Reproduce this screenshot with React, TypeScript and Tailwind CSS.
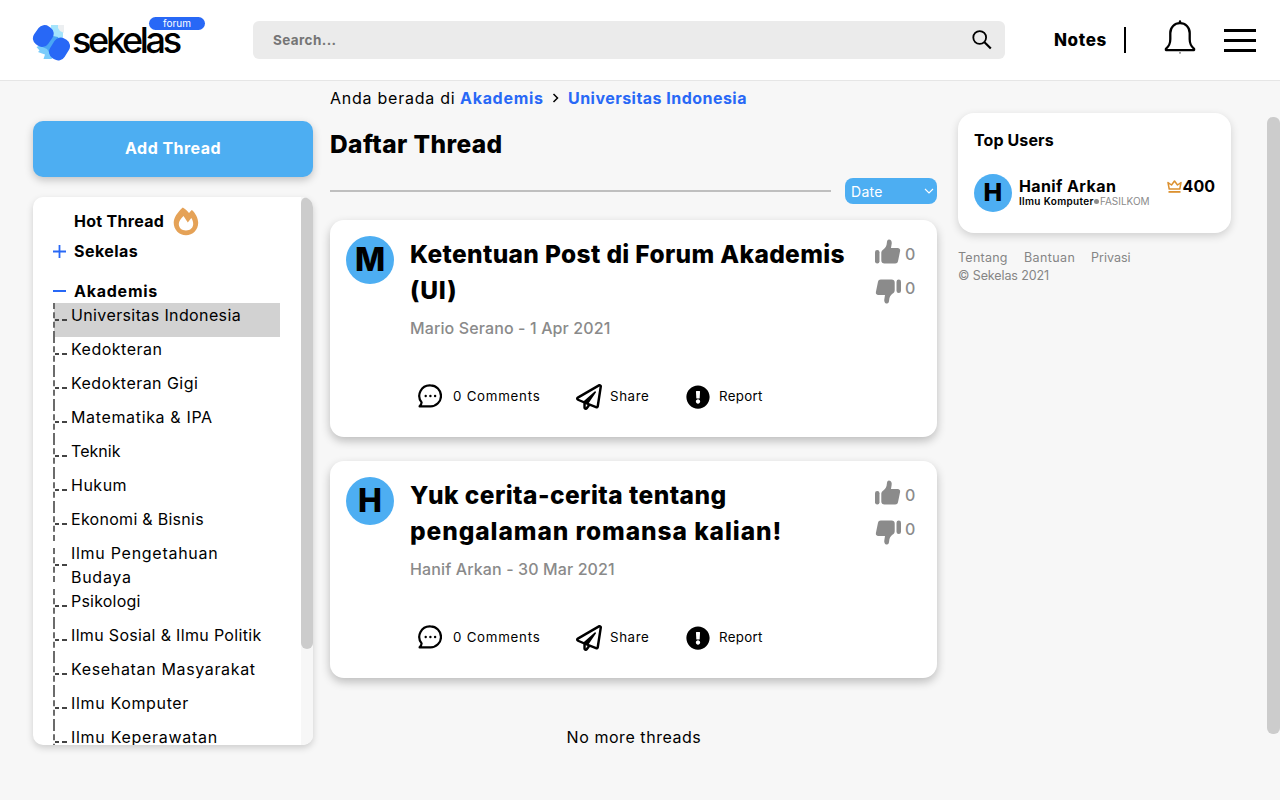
import React from "react";
import { FaRegPaperPlane, FaExclamationCircle } from "react-icons/fa";

function LogoMark() {
  return (
    <svg width="38" height="40" viewBox="0 0 38 40" className="shrink-0">
      <path d="M19 3h12v12l-5 6-8-4z" fill="#a4e4fc" />
      <path d="M26 3h6v8l-4-2-2-3z" fill="#eceff1" />
      <path d="M4.500 25l3 3.500L6 30l4 1.500 3 1-1.500 4.500h8l8-12-8-7z" fill="#7accfb" />
      <path d="M8 24l10-6 3-4 5 1 2 5-10 12-3-5z" fill="#4aa6f4" />
      <rect x="-8.500" y="-11" width="17" height="22" rx="7.400" transform="translate(11.300 14) rotate(36)" fill="#2868f6" />
      <rect x="-8.500" y="-11.500" width="17" height="23" rx="7.400" transform="translate(27.500 27) rotate(32)" fill="#2868f6" />
    </svg>
  );
}

function BellIcon() {
  return (
    <svg width="32" height="36" viewBox="0 0 32 36" fill="none">
      <path d="M16 3.200c-5.600 0-9.700 4.100-9.700 9.700v6.300c0 5-1.200 6.800-4.400 9.600v1.300h28.200v-1.300c-3.200-2.800-4.400-4.600-4.400-9.600v-6.300c0-5.600-4.100-9.700-9.700-9.700z" stroke="#000" strokeWidth="2.300" strokeLinejoin="round" />
      <path d="M14.800 3V1.500a1.200 1.200 0 0 1 2.400 0V3z" fill="#000" />
      <path d="M15 32.400h2c0 1.400-2 1.400-2 0z" fill="#333" />
    </svg>
  );
}

function FlameIcon() {
  return (
    <svg width="26" height="29" viewBox="0 0 26 29">
      <path fillRule="evenodd" d="M9.800.5c2.500 1.400 4.600 3.400 6.200 5.600 1-1.500 2.100-2.600 2.900-3.200 3.800 3.400 6.300 8.500 6.300 12.900C25.200 22.900 19.700 28.300 13 28.300S.7 22.900.7 15.800C.7 11 4.400 5.200 9.800.5zM13 23.500c4.300 0 7.200-2.900 7.200-6.500 0-2.300-.8-4.400-1.900-6l-3.500 4.500L10.500 9C7.800 11.600 5.800 14.300 5.800 17c0 3.700 2.900 6.500 7.200 6.500z" fill="#e5a257" />
    </svg>
  );
}

function ThumbIcon() {
  return (
    <svg width="27" height="26" viewBox="0 0 27 26" fill="#8b8b8b">
      <rect x="1" y="11" width="4.500" height="13.500" rx="2.200" />
      <path d="M7.300 13.800c0-1.500.7-2.400 2-3.400 2.600-2 3.300-3.700 3.600-7 .2-1.900.8-2.900 2.100-2.900 2.300 0 3.100 2.300 2.600 4.800L17 9h6.600c1.900 0 2.900 1.400 2.500 3l-2.100 10.300c-.4 1.500-1.300 2.200-2.800 2.200H10.500c-2 0-3.200-.9-3.200-2.900z" />
    </svg>
  );
}

function CommentIcon() {
  return (
    <svg width="24" height="24" viewBox="0 0 24 24" fill="none">
      <path d="M12.500 1.400A10.500 10.500 0 1 1 12.500 22.400H1.600c1.100-1.100 1.900-2 2-4A10.500 10.500 0 0 1 12.500 1.400z" stroke="#000" strokeWidth="2.200" strokeLinejoin="round" />
      <g fill="#000">
        <circle cx="7.700" cy="12" r="1.200" />
        <circle cx="12.400" cy="12" r="1.200" />
        <circle cx="17.100" cy="12" r="1.200" />
      </g>
    </svg>
  );
}

function CrownIcon() {
  return (
    <svg width="15" height="13" viewBox="0 0 15 13" fill="none" stroke="#dc9130" strokeWidth="1.500" strokeLinejoin="round">
      <path d="M2.200 9L1 2.500 4.500 5l3-4 3 4L14 2.500 12.800 9z" />
      <path d="M1.500 11.900h12" strokeWidth="1.800" />
    </svg>
  );
}

function Header() {
  return (
    <header className="flex h-[81px] shrink-0 items-start border-b border-[#e6e6e6] bg-white">
      <div className="relative mt-[22px] ml-8 flex h-10 w-[221px] items-start">
        <LogoMark />
        <span className="ml-[2px] text-[36px] leading-[36px] font-medium tracking-[-3.300px]">sekelas</span>
        <span className="absolute -top-[5px] left-[117px] flex h-[13px] w-[56px] items-center justify-center rounded-full bg-[#2868f6] text-[10px] text-white">
          forum
        </span>
      </div>
      <div className="mt-[21px] flex h-[38px] w-[752px] items-center justify-between rounded-md bg-[#ebebeb] pr-3 pl-5">
        <span className="text-[13.500px] font-bold tracking-[0.400px] text-[#757575]">Search...</span>
        <svg width="22" height="22" viewBox="0 0 22 22" fill="none" stroke="#000">
          <circle cx="8.700" cy="8.500" r="6.400" strokeWidth="1.800" />
          <path d="M13.500 13.300l6.300 6.200" strokeWidth="2.200" />
        </svg>
      </div>
      <span className="mt-[28px] ml-[49px] w-[70px] text-[17px] leading-6 font-extrabold tracking-[0.600px]">Notes</span>
      <div className="mt-[27px] h-[26px] w-[2px] bg-black" />
      <div className="mt-5 ml-[38px]">
        <BellIcon />
      </div>
      <div className="mt-[29px] ml-7 flex w-8 flex-col gap-[7px]">
        <div className="h-[3px] bg-black" />
        <div className="h-[3px] bg-black" />
        <div className="h-[3px] bg-black" />
      </div>
    </header>
  );
}

const faculties = [
  { name: "Universitas Indonesia", track: "tracking-[0.380px]" },
  { name: "Kedokteran", track: "tracking-[0.500px]" },
  { name: "Kedokteran Gigi", track: "tracking-[0.450px]" },
  { name: "Matematika & IPA", track: "tracking-[0.650px]" },
  { name: "Teknik", track: "tracking-[0.050px]" },
  { name: "Hukum", track: "tracking-[0.500px]" },
  { name: "Ekonomi & Bisnis", track: "tracking-[0.280px]" },
  { name: "Ilmu Pengetahuan Budaya", track: "tracking-[0.720px]" },
  { name: "Psikologi", track: "tracking-[0.200px]" },
  { name: "Ilmu Sosial & Ilmu Politik", track: "tracking-[0.330px]" },
  { name: "Kesehatan Masyarakat", track: "tracking-[0.650px]" },
  { name: "Ilmu Komputer", track: "tracking-[0.650px]" },
  { name: "Ilmu Keperawatan", track: "tracking-[0.710px]" },
];

function Sidebar() {
  return (
    <aside className="mt-10 ml-[33px] flex w-[280px] flex-col">
      <button className="h-14 rounded-[10px] bg-[#4daef2] pb-0.5 text-[16px] font-bold tracking-[0.450px] text-white shadow-[0_3px_8px_rgba(0,0,0,0.22)]">
        Add Thread
      </button>
      <div className="mt-5 flex h-[548px] overflow-hidden rounded-[10px] bg-white shadow-[0_3px_7px_rgba(0,0,0,0.17)]">
        <div className="flex w-[268px] flex-col pl-5">
          <div className="mt-[9px] flex h-[30px] shrink-0 items-center pl-[21px] text-[16px] font-bold">
            <span className="w-[99px] tracking-[0.300px]">Hot Thread</span>
            <FlameIcon />
          </div>
          <div className="flex h-[30px] shrink-0 items-center text-[16px] font-bold tracking-[0.450px]">
            <svg width="13" height="13" viewBox="0 0 13 13" stroke="#2868f6" strokeWidth="1.800" className="mr-2">
              <path d="M0 6.500h13M6.500 0v13" />
            </svg>
            Sekelas
          </div>
          <div className="mt-[10px] flex h-[27px] shrink-0 items-center pt-[2px] text-[16px] font-bold tracking-[0.750px]">
            <div className="mr-2 h-[2px] w-[13px] bg-[#2868f6]" />
            Akademis
          </div>
          <ul className="flex shrink-0 flex-col">
            {faculties.map((f, i) => (
              <li
                key={f.name}
                className={
                  "flex min-h-[34px] w-[227px] shrink-0 items-center " +
                  (i === 0 ? "bg-[linear-gradient(90deg,white_1px,#d2d2d2_1px)]" : "")
                }
              >
                <div className="flex h-[34px] w-[14px] items-center border-l-2 border-dashed border-[#6b6b6b]">
                  <div className="h-[2px] w-full bg-[linear-gradient(90deg,#444_4px,transparent_4px,transparent_7px,#444_7px)]" />
                </div>
                <span className={"ml-1 w-[170px] self-start text-[16px] leading-6 " + (i === 7 ? "" : "whitespace-nowrap ") + f.track}>
                  {f.name}
                </span>
              </li>
            ))}
          </ul>
        </div>
        <div className="w-3 bg-[#f7f7f7]">
          <div className="h-[452px] rounded-md bg-[#cccccc]" />
        </div>
      </div>
    </aside>
  );
}

function Thread({ initial, lines, meta, tracks }: { initial: string; lines: string[]; meta: string; tracks: string[] }) {
  return (
    <article className="flex h-[217px] w-[607px] shrink-0 rounded-[14px] bg-white pt-4 pl-4 shadow-[0_4px_10px_rgba(0,0,0,0.24)]">
      <div className="flex size-12 shrink-0 items-center justify-center rounded-full bg-[#4daef2] text-[32px] font-extrabold">{initial}</div>
      <div className="ml-4 flex w-[464px] flex-col">
        <h2 className="text-[24.500px] leading-9 font-extrabold">
          {lines.map((l, i) => (
            <span key={l} className={"block whitespace-nowrap " + tracks[i]}>{l}</span>
          ))}
        </h2>
        <p className="text-[16px] leading-10 font-medium tracking-[0.120px] whitespace-nowrap text-[#8a8a8a]">{meta}</p>
        <div className="mt-[35px] flex h-7 items-center text-[13.300px]">
          <div className="ml-2 flex w-[158px] items-center gap-[11px]">
            <div className="-mt-0.5">
              <CommentIcon />
            </div>
            <span className="tracking-[0.750px]">0 Comments</span>
          </div>
          <div className="flex w-[110px] items-center gap-2 tracking-[0.600px]">
            <FaRegPaperPlane size={26} />
            Share
          </div>
          <div className="flex items-center gap-[9px] tracking-[0.300px]">
            <FaExclamationCircle size={24} />
            Report
          </div>
        </div>
      </div>
      <div className="flex flex-col text-[16px] leading-6 font-medium text-[#8b8b8b]">
        <div className="mt-px flex items-center gap-1">
          <ThumbIcon />
          <span className="mt-[5px]">0</span>
        </div>
        <div className="mt-[10px] flex items-start gap-[3px]">
          <div className="mt-[2px] ml-px rotate-180">
            <ThumbIcon />
          </div>
          <span>0</span>
        </div>
      </div>
    </article>
  );
}

function Main() {
  return (
    <main className="ml-[17px] flex w-[608px] flex-col">
      <div className="mt-[5px] flex h-6 items-center text-[16px] whitespace-nowrap">
        <span className="w-[130px] tracking-[0.750px]">Anda berada di</span>
        <span className="w-[92px] font-bold tracking-[0.700px] text-[#2868f6]">Akademis</span>
        <svg width="8" height="10" viewBox="0 0 8 10" fill="none" stroke="#000" strokeWidth="1.500" className="mr-[8px]">
          <path d="M1.500 1l4 4-4 4" />
        </svg>
        <span className="font-bold tracking-[0.470px] text-[#2868f6]">Universitas Indonesia</span>
      </div>
      <h1 className="mt-4 text-[24.500px] leading-9 font-extrabold tracking-[0.400px]">Daftar Thread</h1>
      <div className="mt-[15px] flex h-[28px] items-center">
        <div className="h-[2px] w-[501px] bg-[#bfbfbf]" />
        <div className="ml-[14px] flex h-[26px] w-[92px] items-center justify-between rounded-[8px] bg-[#4daef2] pr-[3px] pl-[6px] text-[14px] text-white">
          <span className="tracking-[0.300px]">Date</span>
          <svg width="10" height="7" viewBox="0 0 10 7" fill="none" stroke="#fff" strokeWidth="1.100">
            <path d="M1 1l4 4 4-4" />
          </svg>
        </div>
      </div>
      <div className="mt-[15px] flex flex-col gap-6">
        <Thread initial="M" lines={["Ketentuan Post di Forum Akademis", "(UI)"]} tracks={["tracking-[0.350px]", "tracking-[0.800px]"]} meta="Mario Serano - 1 Apr 2021" />
        <Thread initial="H" lines={["Yuk cerita-cerita tentang", "pengalaman romansa kalian!"]} tracks={["tracking-[0.450px]", "tracking-[0.920px]"]} meta="Hanif Arkan - 30 Mar 2021" />
      </div>
      <p className="mt-[47px] text-center text-[16px] leading-6 tracking-[0.550px]">No more threads</p>
    </main>
  );
}

function Right() {
  return (
    <aside className="mt-[32px] ml-5 flex w-[273px] flex-col">
      <div className="flex h-[120px] flex-col rounded-[16px] bg-white px-4 pt-[15px] shadow-[0_3px_8px_rgba(0,0,0,0.16)]">
        <h3 className="text-[16px] leading-6 font-bold tracking-[0.100px]">Top Users</h3>
        <div className="mt-[22px] flex">
          <div className="flex size-[38px] items-center justify-center rounded-full bg-[#4daef2] text-[25px] font-extrabold">H</div>
          <div className="ml-[7px] flex w-[148px] flex-col">
            <span className="text-[16px] leading-6 font-bold tracking-[0.400px] whitespace-nowrap">Hanif Arkan</span>
            <span className="-mt-px flex items-center text-[10px] leading-[8px] whitespace-nowrap text-[#8b8b8b]">
              <span className="font-semibold tracking-[0.350px] text-black">Ilmu Komputer</span>
              <span className="mr-px size-[5px] rounded-full bg-[#8b8b8b]" />
              FASILKOM
            </span>
          </div>
          <div className="flex h-6 items-center gap-px text-[16px] font-bold">
            <CrownIcon />
            400
          </div>
        </div>
      </div>
      <div className="mt-4 flex text-[12.500px] leading-[18px] text-[#858585]">
        <span className="w-[66px] tracking-[0.250px]">Tentang</span>
        <span className="w-[67px] tracking-[0.400px]">Bantuan</span>
        <span>Privasi</span>
      </div>
      <p className="text-[12.500px] leading-[17px] tracking-[-0.100px] text-[#858585]">© Sekelas 2021</p>
    </aside>
  );
}

export default function App() {
  return (
    <div className="flex h-[800px] w-[1280px] flex-col overflow-hidden bg-[#f7f7f7] font-['Inter','Noto_Sans',sans-serif] text-black">
      <Header />
      <div className="flex flex-1 items-start">
        <Sidebar />
        <Main />
        <Right />
        <div className="mt-9 ml-auto h-[617px] w-[13px] rounded-md bg-[#cccccc]" />
      </div>
    </div>
  );
}
